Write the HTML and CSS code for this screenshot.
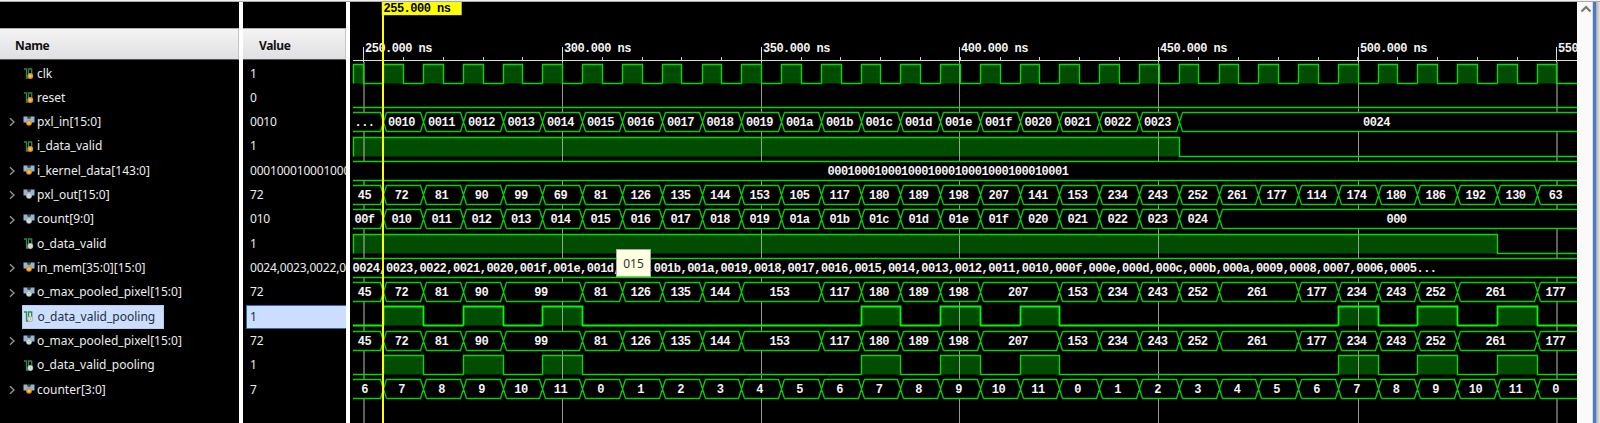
FILE: index.html
```
<!DOCTYPE html>
<html lang="en">
<head>
<meta charset="utf-8">
<title>Waveform</title>
<link rel="stylesheet" href="styles.css">
</head>
<body>
<svg class="defs" width="0" height="0">
  <defs>
    <radialGradient id="g-orange"><stop offset="0" stop-color="#ffd9a0"/><stop offset=".45" stop-color="#f3a53c"/><stop offset="1" stop-color="#d98416"/></radialGradient>
    <radialGradient id="g-gray"><stop offset="0" stop-color="#777"/><stop offset=".35" stop-color="#eee"/><stop offset="1" stop-color="#aaa"/></radialGradient>
    <symbol id="wire" viewBox="0 0 12 12"><path d="M1 1H3.500V10H5.500M5.500 9.500V1H8.700V6" fill="none" stroke="#2f8a45" stroke-width="1.3"/></symbol>
    <symbol id="bus" viewBox="0 0 12 12"><path d="M.5.5H4.500V2.500H7.500V.5H11.500V6.500H9L6 9 3 6.500H.5Z" fill="#8fb9cf"/><path d="M4.500.5 6 3.500 7.500.5" fill="#456"/></symbol>
  </defs>
</svg>
<div class="window">
  <div class="viewer">
    <div class="col names">
      <div class="head">Name</div>
      <div class="rows" id="names"></div>
    </div>
    <div class="col values">
      <div class="head">Value</div>
      <div class="rows" id="values"></div>
    </div>
    <div class="wave">
      <svg id="wave" width="1227" height="421" viewBox="350 2 1227 421"></svg>
      <div class="tooltip">015</div>
    </div>
    <div class="scroll"><svg width="12" height="8" viewBox="0 0 12 8"><path d="M1.5 6.5 6 2 10.500 6.500" fill="none" stroke="#777" stroke-width="2.2"/></svg></div>
    <div class="edge"></div>
  </div>
</div>
<script src="wave.js"></script>
</body>
</html>
```

FILE: styles.css
```
* { box-sizing: border-box; }
body { margin: 0; background: #000; overflow: hidden; }
.defs { position: absolute; }
.window { height: 423px; border-top: 1px solid #f0f0f0; font: 12px/24.33px "Noto Sans", "Open Sans", sans-serif; color: #ececec; }
.viewer { height: 422px; border-top: 1px solid #a8aaac; display: flex; }
.col { padding-top: 26px; overflow: hidden; flex: none; }
.names { width: 243px; border-right: 4px solid #fff; }
.values { width: 107px; border-right: 4px solid #fff; }
.head { height: 32px; border-top: 1px solid #b0b0b0; border-right: 1px solid #c4c4c4; border-bottom: 1px solid #555; background: linear-gradient(#f4f4f4, #e0e0e3); color: #111; font-weight: bold; line-height: 33px; padding-left: 15px; letter-spacing: -.35px; }
.values .head { padding-left: 16px; }
.rows { padding-top: 1.5px; }
.row { height: 24.33px; display: flex; align-items: center; white-space: nowrap; }
.names .row { padding-left: 9px; }
.arrow { width: 7px; height: 10px; margin-right: 6px; flex: none; }
.item { display: flex; align-items: center; height: 24.33px; padding-right: 9px; }
.item .icon { width: 12px; height: 12px; margin: 0 2.500px 0 .5px; overflow: visible; flex: none; }
.values .row { margin-left: 3px; padding-left: 4px; width: 110px; letter-spacing: -.19px; }
.selected { background: #ccdeff; color: #22303c; }
.names .selected { border: 1px solid #b4cdf5; padding-right: 8px; }
.names .selected .icon { margin-left: 0; }
.values .selected { border: 1px solid #2d6f9f; padding-left: 3px; }
.wave { position: relative; width: 1227px; flex: none; }
.wave > svg { display: block; }
.wave text { font: bold 12px "Liberation Mono", monospace; letter-spacing: -.51px; fill: #f4f4f4; white-space: pre; }
.wave .flag-text { fill: #000; }
.tooltip { position: absolute; left: 266px; top: 247px; width: 35px; height: 28px; background: #ffffe1; border: 1px solid #aaa; color: #333; text-align: center; line-height: 27px; }
.scroll { width: 15px; background: #fafafa; padding: 3px 0 0 3px; flex: none; line-height: 8px; }
.edge { width: 8px; background: linear-gradient(90deg, #ddd 0 1px, #4a7bcb 1px 4px, #aaa 4px, #e6e6e6); flex: none; }
```

FILE: wave.js
```
const START = 353, END = 1577, T0 = 383.4, STEP = 39.77;
const TOPS = [64, 88, 112, 137, 161, 185, 209, 234, 258, 282, 306, 331, 355, 379];
const at = k => Math.round(T0 + k * STEP);
const hex = (from, to, width) => Array.from({ length: to - from + 1 }, (_, i) => [(from + i).toString(16).padStart(width, '0'), 1]);
const cells = text => text.split(' ').map(v => { const [label, n] = v.split('*'); return [label, +(n || 1)]; });

const pooled = cells('72 81 90 99*2 81 126 135 144 153*2 117 180 189 198 207*2 153 234 243 252 261*2 177 234 243 252 261*2 177');
const pulses = [0, 2, 4, 12, 14, 16, 24, 26, 28].map(k => [at(k), at(k + 1)]);
const clock = [[START, 363]];
for (let k = 0; k < 30; k++) clock.push([at(k), Math.round(T0 - .2 + (k + .5) * STEP)]);
const memory = Array.from({ length: 32 }, (_, i) => (0x24 - i).toString(16).padStart(4, '0')).join(',') + '...';

const signals = [
  { name: 'clk', value: '1', high: clock, input: true },
  { name: 'reset', value: '0', high: [], input: true },
  { name: 'pxl_in[15:0]', value: '0010', first: '...', bus: [...hex(16, 35, 4), ['0024', 10]], input: true },
  { name: 'i_data_valid', value: '1', high: [[START, at(20)]], input: true },
  { name: 'i_kernel_data[143:0]', value: '000100010001000100010001000100010001', flat: ['0001'.repeat(9), 827.5], input: true },
  { name: 'pxl_out[15:0]', value: '72', first: '45', bus: cells('72 81 90 99 69 81 126 135 144 153 105 117 180 189 198 207 141 153 234 243 252 261 177 114 174 180 186 192 130 63') },
  { name: 'count[9:0]', value: '010', first: '00f', bus: [...hex(16, 36, 3), ['000', 9]] },
  { name: 'o_data_valid', value: '1', high: [[START, at(28)]] },
  { name: 'in_mem[35:0][15:0]', value: '0024,0023,0022,0021', flat: [memory, 352.6], input: true },
  { name: 'o_max_pooled_pixel[15:0]', value: '72', first: '45', bus: pooled },
  { name: 'o_data_valid_pooling', value: '1', high: pulses, selected: true },
  { name: 'o_max_pooled_pixel[15:0]', value: '72', first: '45', bus: pooled },
  { name: 'o_data_valid_pooling', value: '1', high: pulses },
  { name: 'counter[3:0]', value: '7', first: '6', bus: Array.from({ length: 30 }, (_, k) => [String((k + 7) % 12), 1]), input: true },
];

const chevron = '<svg class="arrow" viewBox="0 0 7 10"><path d="M1 1.200 5 5 1 8.800" fill="none" stroke="#999" stroke-width="1.3"/></svg>';
const icon = s => `<svg class="icon" viewBox="0 0 12 12"><use href="#${s.high ? 'wire' : 'bus'}" width="12" height="12"/>
  <circle cx="${s.high ? 7.3 : 6}" cy="${s.high ? 8 : 6.8}" r="2.900" fill="url(#${s.input ? 'g-orange' : 'g-gray'})"/></svg>`;
document.getElementById('names').innerHTML = signals.map(s =>
  `<div class="row">${s.high ? '<span class="arrow"></span>' : chevron}<span class="item${s.selected ? ' selected' : ''}">${icon(s)}<span>${s.name}</span></span></div>`).join('');
document.getElementById('values').innerHTML = signals.map(s =>
  `<div class="row${s.selected ? ' selected' : ''}">${s.value}</div>`).join('');

const CHAR = 6.69;
const label = (text, x, y, cls = '') => `<text x="${x.toFixed(2)}" y="${y}" class="${cls}">${text}</text>`;
const centered = (text, cx, y) => label(text, cx - text.length * CHAR / 2, y);
const path = (d, color, width = 1) => `<path d="${d}" stroke="${color}" stroke-width="${width}" fill="none"/>`;

const majors = [363, 562, 761, 959, 1158, 1358, 1556];
let back = '', grid = '', front = '';
majors.forEach((x, i) => {
  const wide = i === 0 || i === 6;
  grid += `<rect x="${x}" y="62" width="${wide ? 2 : 1}" height="361" fill="#bbb" opacity="${wide ? .5 : .8}"/>`;
  front += `<rect x="${x}" y="47" width="1" height="15" fill="#ddd"/>` + label(`${250 + i * 50}.000 ns`, x + 2, 52);
});
for (let k = 0; k < 31; k++) front += `<rect x="${Math.round(363.2 + k * STEP)}" y="57" width="1" height="4" fill="#ccc"/>`;
front += `<rect x="353" y="60" width="1224" height="1" fill="#ddd"/>`;

signals.forEach((s, i) => {
  const top = TOPS[i] + .5, bottom = top + 19, base = TOPS[i] + 14;
  if (s.high) {
    let d = '', low = START;
    s.high.forEach(([a, b]) => {
      back += `<rect x="${a}" y="${top}" width="${b - a}" height="19" fill="#004c00"/>`;
      if (a > low) d += `M${low} ${bottom}H${a + .5}`;
      d += `M${a + .5} ${bottom}V${top}H${b + .5}V${bottom}`;
      low = b;
    });
    d += `M${low} ${bottom}H${END}`;
    front += path(d, s.selected ? '#00fa00' : '#00dc00', s.selected ? 1.8 : 1.35);
  } else if (s.flat) {
    front += `<rect x="${START}" y="${top}" width="${END - START}" height="19" fill="#000"/>`;
    front += path(`M${START} ${top}H${END}M${START} ${bottom}H${END}`, '#00dc00', 1.3) + label(s.flat[0], s.flat[1], base);
  } else {
    front += `<rect x="${START}" y="${top}" width="${END - START}" height="19" fill="#000"/>`;
    let k = 0, text = centered(s.first, 364.5, base);
    let d = `M${START} ${top}H380.500L386.500 ${bottom}M${START} ${bottom}H380.500L386.500 ${top}`;
    s.bus.forEach(([t, n]) => {
      const a = at(k) + 3.5, x = at(k + n), last = k + n >= 30;
      if (last) d += `M${a} ${top}H${END}M${a} ${bottom}H${END}`;
      else d += `M${a} ${top}H${x - 2.5}L${x + 3.5} ${bottom}M${a} ${bottom}H${x - 2.5}L${x + 3.5} ${top}`;
      text += centered(t, (at(k) + (last ? END : x)) / 2 - 1.500, base);
      k += n;
    });
    front += path(d, '#00d400', 1.3) + text;
  }
});

front += `<rect x="382" y="2" width="2" height="421" fill="#ff0"/><rect x="382" y="2" width="79.500" height="13" fill="#ff0" stroke="#ccc" stroke-width=".5"/>` + label('255.000 ns', 383.500, 12, 'flag-text');
document.getElementById('wave').innerHTML = back + grid + front;
```
